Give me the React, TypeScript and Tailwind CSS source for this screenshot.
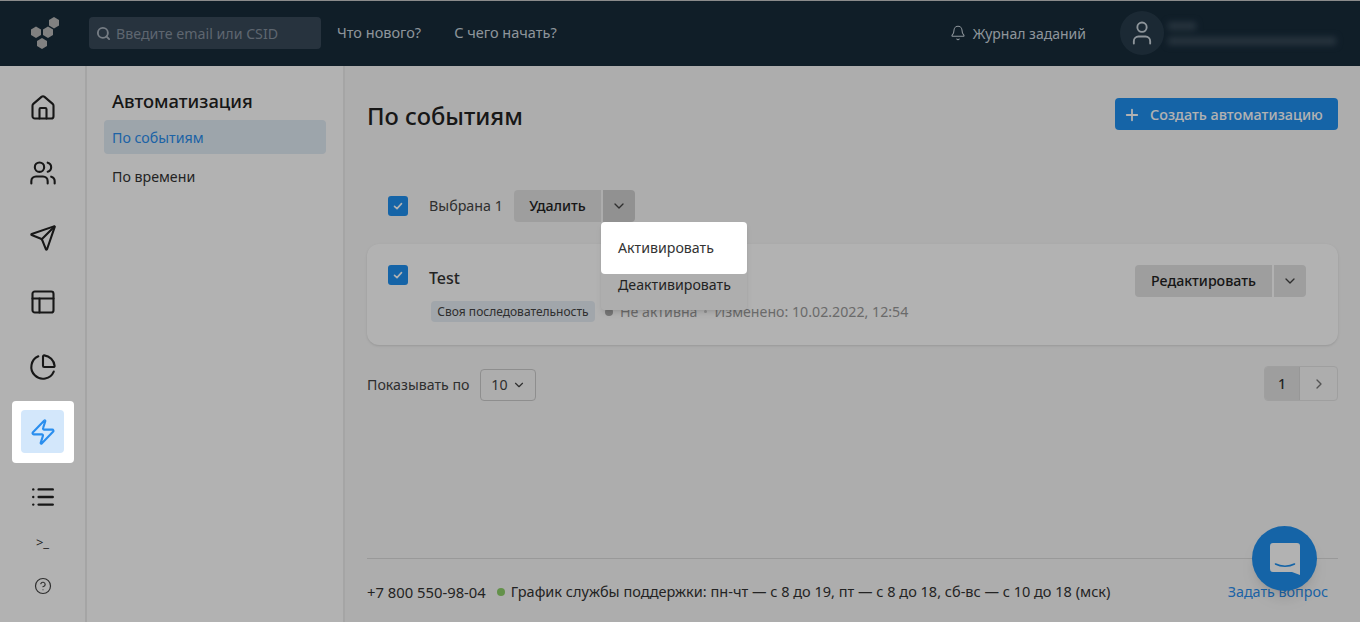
import React from 'react';
import { Bell, ChartPie, ChevronDown, ChevronRight, CircleHelp, House, List, PanelsTopLeft, Plus, Search, Send, User, Users, Zap } from 'lucide-react';

const navIcons = [House, Users, Send, PanelsTopLeft, ChartPie];

function SplitButton({ label, width, darker }: { label: string; width: string; darker?: boolean }) {
    return (
        <div className="flex h-8 gap-[2px]">
            <button className={`${width} h-8 rounded-l bg-[#e3e3e3] text-[14.200px] font-medium text-[#222]`}>{label}</button>
            <button className={`flex h-8 w-8 items-center justify-center rounded-r ${darker ? 'bg-[#d0d0d0]' : 'bg-[#e3e3e3]'}`}>
                <ChevronDown className="h-4 w-4 text-[#444]" strokeWidth={2} />
            </button>
        </div>
    );
}

function Check() {
    return (
        <span className="flex h-5 w-5 items-center justify-center rounded-[3px] bg-[#1f90f0]">
            <svg viewBox="0 0 12 12" className="h-3 w-3" fill="none" stroke="#fff" strokeWidth="1.6" strokeLinecap="round" strokeLinejoin="round">
                <path d="M2.5 6.3 5 8.6l4.5-5" />
            </svg>
        </span>
    );
}

export default function App() {
    return (
        <div className="relative flex h-[622px] w-[1360px] flex-col overflow-hidden bg-[#f8f8f8] font-['Noto_Sans',sans-serif] text-[#222]">
            {/* Header */}
            <header className="flex h-[66px] shrink-0 items-center border-t border-[#c8c8c8] bg-[#172b3a] pb-[1px] pl-[29px] pr-5">
                <svg viewBox="0 0 32 32" className="h-8 w-8 shrink-0" fill="#b9b9b9">
                    <polygon points="7,9 12,12 12,17.5 7,20.5 2,17.5 2,12" transform="translate(0,0.5)" />
                    <polygon points="19,9 24,12 24,17.5 19,20.5 14,17.5 14,12" transform="translate(0,0.5)" />
                    <polygon points="13,21 18,24 18,29 13,32 8,29 8,24" />
                    <polygon points="25,0 30,3 30,8.500 25,11.500 20,8.500 20,3" />
                </svg>
                <div className="ml-7 flex h-8 w-[232px] items-center rounded bg-[#38495a] pl-[7px] pt-[1px] text-[14.200px] text-[#8793a0]">
                    <Search className="mr-[5px] h-[15px] w-[15px] text-[#a9b3bd]" strokeWidth={3} />
                    Введите email или CSID
                </div>
                <a className="ml-4 text-[14.500px] text-[#ccd6de]">Что нового?</a>
                <a className="ml-[33px] text-[14.500px] text-[#ccd6de]">С чего начать?</a>
                <div className="ml-auto flex items-center text-[14px] text-[#ccd6de]">
                    <Bell className="mr-[7px] h-4 w-4" strokeWidth={1.6} />
                    Журнал заданий
                </div>
                <div className="ml-[34px] flex h-11 w-11 items-center justify-center rounded-full bg-[#283c4b]">
                    <User className="h-7 w-7 text-[#ccd6de]" strokeWidth={1.6} />
                </div>
                <div className="ml-[4px] flex w-[172px] flex-col gap-[7px] blur-[3px]">
                    <div className="h-2 w-7 bg-[#3a4c5a]" />
                    <div className="h-2 w-[168px] bg-[#3a4c5a]" />
                </div>
            </header>

            <div className="flex min-h-0 flex-1">
                {/* Icon rail */}
                <nav className="flex w-[87px] shrink-0 flex-col items-center gap-[2.800px] border-r-2 border-[#ececec] bg-white pt-[11px]">
                    {navIcons.map((Icon, i) => (
                        <div key={i} className="flex h-[62px] w-[62px] items-center justify-center text-[#222]">
                            <Icon className="h-7 w-7" strokeWidth={1.8} />
                        </div>
                    ))}
                    <div className="relative z-20 flex h-[62px] w-[62px] items-center justify-center rounded bg-white">
                        <div className="flex h-[43px] w-[43px] items-center justify-center rounded-sm bg-[#d3e7fb]">
                            <Zap className="h-7 w-7 text-[#2a8eee]" strokeWidth={1.8} />
                        </div>
                    </div>
                    <div className="flex h-[62px] w-[62px] items-center justify-center">
                        <List className="h-[26px] w-[26px]" strokeWidth={2.2} />
                    </div>
                    <div className="flex h-6 items-center text-[13px] leading-none text-[#333]">{'>_'}</div>
                    <div className="mt-[20px]">
                        <CircleHelp className="h-[18px] w-[18px] text-[#444]" strokeWidth={1.6} />
                    </div>
                </nav>

                {/* Section menu */}
                <aside className="flex w-[258px] shrink-0 flex-col border-r-2 border-[#ececec] bg-white px-[17px] pt-[21px]">
                    <h2 className="pl-2 text-[18.400px] font-medium leading-7">Автоматизация</h2>
                    <div className="mt-[5px] flex h-[34px] items-center rounded bg-[#e1ecf5] pl-2 pt-[2px] text-[14.200px] text-[#2a8eee]">По событиям</div>
                    <div className="mt-1 flex h-[38px] items-center pl-2 text-[14.200px] text-[#333]">По времени</div>
                </aside>

                {/* Main */}
                <main className="flex min-w-0 flex-1 flex-col px-[22px]">
                    <div className="flex items-start justify-between pt-8">
                        <h1 className="text-[23.700px] font-medium leading-9">По событиям</h1>
                        <button className="flex h-8 w-[223px] items-center rounded bg-[#1f90f0] pl-[8px] pt-[1px] text-[14.400px] font-medium text-white">
                            <Plus className="mr-[9px] h-[18px] w-[18px]" strokeWidth={2.4} />
                            Создать автоматизацию
                        </button>
                    </div>

                    <div className="relative mt-[56px] flex items-center pl-[21px]">
                        <Check />
                        <span className="ml-[21px] text-[14.300px] text-[#444]">Выбрана 1</span>
                        <div className="ml-[11px]">
                            <SplitButton label="Удалить" width="w-[87px]" darker />
                        </div>
                        {/* Dropdown */}
                        <div className="absolute left-[234px] top-8 w-[146px] rounded-b bg-[#fafafa] pb-[14px] shadow-md">
                            <div className="relative z-20 flex h-[52px] items-center rounded bg-white pl-[17px] text-[14.200px] text-[#333]">Активировать</div>
                            <div className="flex h-[22px] items-center pl-[17px] text-[14.200px] text-[#333]">Деактивировать</div>
                        </div>
                    </div>

                    <div className="mt-[22px] flex h-[101px] items-start rounded-xl bg-white pl-[21px] pr-8 shadow-sm">
                        <div className="pt-[21px]"><Check /></div>
                        <div className="ml-[21px] flex-1 pt-[22px]">
                            <div className="text-[16px] font-medium leading-6 text-[#333]">Test</div>
                            <div className="mt-[11px] flex items-center text-[14.200px] text-[#999]">
                                <span className="ml-[2px] flex h-[21px] w-[164px] items-center justify-center rounded-sm bg-[#e7eef5] text-[12px] text-[#444]">Своя последовательность</span>
                                <span className="ml-[10px] h-2 w-2 rounded-full bg-[#aaa]" />
                                <span className="ml-[7px]">Не активна</span>
                                <span className="mx-[7px] h-[3px] w-[3px] rounded-full bg-[#ccc]" />
                                <span>Изменено: 10.02.2022, 12:54</span>
                            </div>
                        </div>
                        <div className="pt-[21px]">
                            <SplitButton label="Редактировать" width="w-[137px]" />
                        </div>
                    </div>

                    <div className="mt-[21px] flex items-center justify-between">
                        <div className="flex items-center pt-[2px] text-[14.200px] text-[#444]">
                            Показывать по
                            <div className="ml-[11px] flex h-[32px] w-14 items-center justify-center gap-1 rounded border border-[#ccc] text-[#444]">
                                10
                                <ChevronDown className="h-[14px] w-[14px]" strokeWidth={2} />
                            </div>
                        </div>
                        <div className="flex h-[35px] w-[74px] overflow-hidden rounded-sm border border-[#e4e4e4]">
                            <div className="flex w-[34px] items-center justify-center bg-[#e3e3e3] text-[14px] font-medium text-[#333]">1</div>
                            <div className="flex flex-1 items-center justify-center border-l border-[#d8d8d8]">
                                <ChevronRight className="h-4 w-4 text-[#777]" strokeWidth={2} />
                            </div>
                        </div>
                    </div>

                    <footer className="mt-auto flex h-[64px] items-center border-t border-[#dcdcdc] pt-[3px] text-[14.530px] text-[#333]">
                        <span className="text-[14.800px]">+7 800 550-98-04</span>
                        <span className="ml-[11px] mr-[6px] h-2 w-2 rounded-full bg-[#8ed06a]" />
                        <span>График службы поддержки: пн-чт — с 8 до 19, пт — с 8 до 18, сб-вс — с 10 до 18 (мск)</span>
                        <a className="ml-auto mr-[10px] text-[14.300px] text-[#2a8eee]">Задать вопрос</a>
                    </footer>
                </main>
            </div>

            {/* Chat launcher */}
            <div className="absolute left-[1252px] top-[526px] flex h-[65px] w-[65px] items-center justify-center rounded-full bg-[#1f90f0] shadow-lg">
                <svg viewBox="0 0 32 32" className="h-8 w-8">
                    <path d="M4 0h24a3 3 0 0 1 3 3v29l-8-3H4a3 3 0 0 1-3-3V3a3 3 0 0 1 3-3z" fill="#fff" />
                    <path d="M6.500 21c5.500 3 13.500 3 19 0" fill="none" stroke="#1f90f0" strokeWidth="1.600" strokeLinecap="round" />
                </svg>
            </div>

            {/* Onboarding dim */}
            <div className="pointer-events-none absolute inset-0 z-10 bg-black/30" />
        </div>
    );
}
